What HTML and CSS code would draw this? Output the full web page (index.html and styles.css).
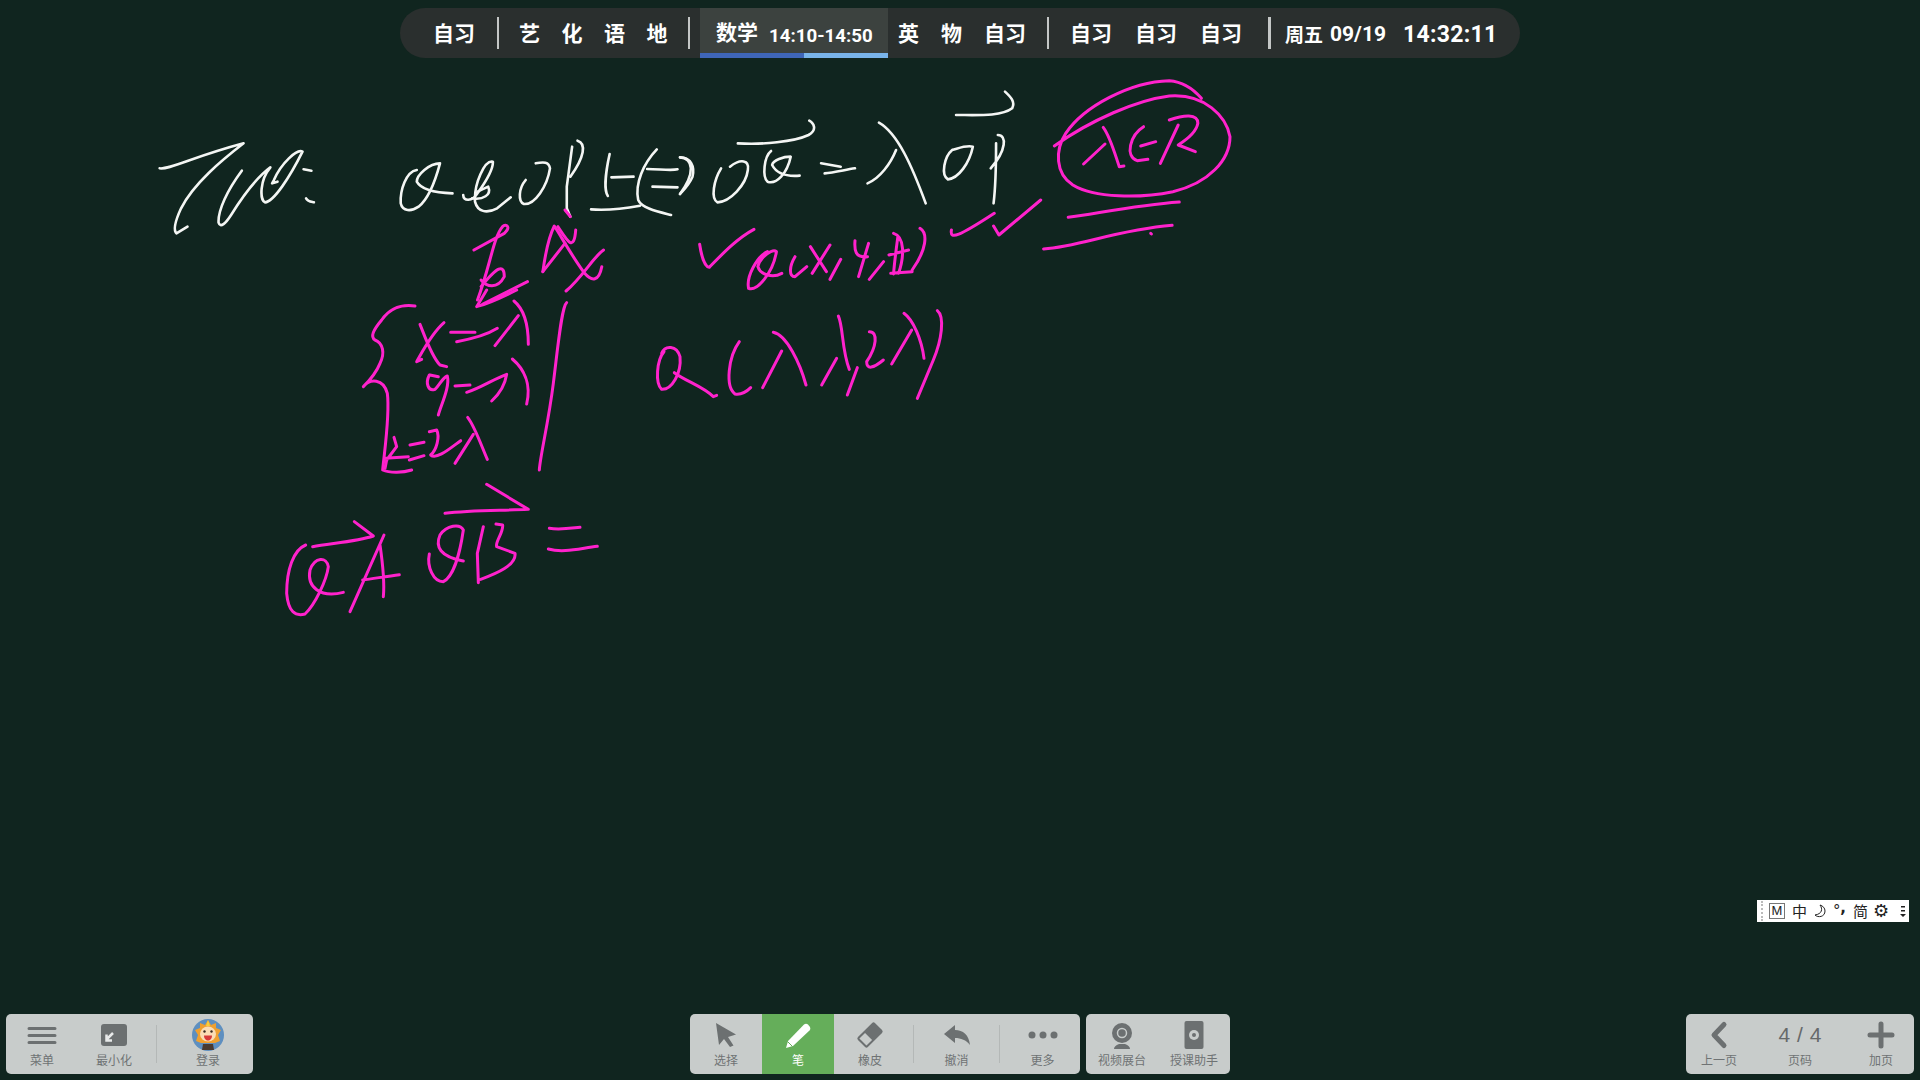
FILE: index.html
```html
<!DOCTYPE html>
<html lang="zh-CN">
<head>
  <meta charset="UTF-8" />
  <title>白板</title>
  <link rel="stylesheet" href="styles.css">
</head>
<body>

  <!-- handwriting on the board -->
  <svg class="ink" viewBox="0 0 1920 1080">
    <g class="white" transform="translate(140 80) scale(.35714 .33333)">
      <path d="M55 265C80 270 150 230 290 190C230 240 150 310 115 385C100 420 92 450 102 460L133 440"/>
      <path d="M285 272C245 330 218 390 220 428C225 445 240 430 255 405C290 345 330 290 365 262C335 300 335 360 350 367C375 365 420 290 455 215C440 205 395 250 375 300L370 310L385 305"/>
      <path d="M458 268L480 272M465 355C470 365 478 365 487 367"/>
      <path d="M775 270C745 275 728 330 730 370C735 395 760 395 780 380C810 355 830 290 840 250C810 250 775 285 775 305C785 325 820 338 875 340"/>
      <path d="M905 345C905 365 930 365 945 340C965 310 990 270 988 245C965 240 935 310 938 365C945 395 970 402 1000 385L1038 352"/>
      <path d="M945 335L975 320C985 345 960 360 930 355"/>
      <path d="M1080 300C1060 325 1058 365 1075 372C1105 375 1140 320 1148 265C1145 245 1130 245 1108 250"/>
      <path d="M1210 200L1195 320L1195 385L1205 410M1225 182C1250 190 1245 230 1205 290"/>
      <path d="M1315 222C1305 270 1298 330 1310 348M1320 292L1382 290M1263 388C1310 392 1360 385 1400 377"/>
      <path d="M1447 208C1410 250 1385 310 1395 360C1405 385 1450 395 1487 405M1420 267C1460 268 1490 272 1505 268M1435 320L1505 322M1512 232C1550 235 1555 280 1512 342"/>
    </g>
    <g class="white" transform="translate(680 70) scale(.35714 .33333)">
      <path d="M0 262C30 262 42 290 35 320C25 345 10 360 0 372"/>
      <path d="M115 295C95 330 85 385 105 397C140 395 185 345 190 300C195 270 170 265 140 290"/>
      <path d="M162 220C230 225 320 215 360 195C385 180 375 160 362 152"/>
      <path d="M255 243C235 260 230 320 245 335C270 345 300 310 310 260C290 260 260 270 258 285C270 310 300 320 335 317"/>
      <path d="M395 280L450 290M405 310C430 308 460 300 490 295"/>
      <path d="M557 158C610 190 650 290 688 400M605 240C590 280 560 325 525 340"/>
      <path d="M762 240C740 260 730 315 750 328C780 325 810 280 820 230C800 225 780 235 762 240"/>
      <path d="M890 195C915 195 915 240 870 295M885 220C885 280 885 340 878 400"/>
      <path d="M773 135C830 135 900 140 930 115C940 95 925 80 910 65"/>
    </g>
    <g class="pink" transform="translate(140 80) scale(.35714 .33333)">
      <path d="M935 510L1020 460C1040 440 1025 430 1015 440C990 470 980 560 945 660"/>
      <path d="M955 620C1000 560 1020 550 1020 590C1000 630 970 620 955 600"/>
      <path d="M960 672L1085 605"/>
      <path d="M1128 575C1135 520 1145 470 1160 438C1180 470 1210 530 1245 580C1265 605 1285 605 1293 560"/>
      <path d="M1128 575L1190 490M1170 440C1195 480 1215 520 1220 450M1298 510C1270 530 1240 590 1193 633"/>
      <path d="M1190 390L1205 410"/>
    </g>
    <g class="pink" transform="translate(680 70) scale(.35714 .33333)">
      <path d="M1048 228C1150 150 1280 90 1370 78C1470 70 1530 140 1540 200C1540 270 1480 340 1380 365C1290 385 1160 385 1100 345C1050 310 1050 240 1080 190C1130 110 1260 35 1370 32C1410 35 1440 60 1460 85"/>
      <path d="M1185 172C1205 200 1220 260 1230 290L1243 288M1190 222L1130 282"/>
      <path d="M1298 170C1260 195 1245 260 1280 272L1310 268M1290 228L1332 215"/>
      <path d="M1395 165L1345 280M1370 150C1410 135 1450 130 1450 160C1445 190 1410 215 1395 225L1443 245"/>
      <path d="M1087 442C1170 430 1280 405 1398 396M1018 537C1120 530 1220 480 1378 466M1318 490L1320 492"/>
      <path d="M760 480C755 510 780 500 880 430M878 468L893 495L1010 390"/>
      <path d="M55 523C60 560 70 590 82 592C120 550 160 505 207 478"/>
      <path d="M245 545C215 560 185 620 192 655C215 665 260 610 270 545C260 535 225 560 218 590C225 615 260 625 285 610"/>
      <path d="M322 560C305 590 305 620 322 620L355 590M365 530L410 605M420 525L370 610M450 568L420 628"/>
      <path d="M490 512C488 540 490 565 525 560M528 520L500 620M570 575L530 628"/>
      <path d="M598 490C630 500 628 560 612 610M590 610L650 605M610 500C605 540 600 580 598 612M585 555L640 540"/>
      <path d="M672 475C695 490 690 540 650 600"/>
    </g>
    <g class="pink" transform="translate(340 290) scale(.33333)">
      <path d="M225 48C180 42 150 55 125 90C100 120 90 140 105 150C130 160 135 190 120 220C110 245 95 265 70 290C90 265 130 265 142 310C150 370 135 470 128 540C150 550 190 548 215 540"/>
      <path d="M240 103C255 140 275 200 300 225L320 230M312 98C275 130 250 180 230 215L245 208"/>
      <path d="M332 127L405 127M350 155C390 148 440 135 472 115"/>
      <path d="M522 33C555 60 565 110 565 163M535 77L465 167"/>
      <path d="M268 255C255 280 265 305 285 298C300 285 305 265 322 258C330 290 305 340 295 375M270 255L295 260"/>
      <path d="M345 288L390 285M380 307C420 295 465 265 500 253C495 285 475 315 455 333"/>
      <path d="M517 207C550 235 575 280 560 342"/>
      <path d="M162 442L170 470L140 510L135 535M135 505L205 500M210 465L252 457M208 510L252 497"/>
      <path d="M268 425L290 420C300 440 290 480 272 495C290 510 330 475 362 452"/>
      <path d="M383 382C405 410 425 470 442 508M400 433L345 520"/>
      <path d="M680 38C665 50 655 160 640 280C625 400 600 500 598 540"/>
      <path d="M530 0C490 20 450 40 410 50L440 0"/>
    </g>
    <g class="pink" transform="translate(640 290) scale(.33333)">
      <path d="M72 185C50 210 45 280 65 298C95 300 125 250 120 200C110 165 75 165 65 190M103 248C140 275 190 290 220 320L230 316"/>
      <path d="M298 155C265 200 255 290 285 312C305 315 320 305 332 293"/>
      <path d="M400 127C440 135 480 220 498 285M425 183L368 293"/>
      <path d="M595 78C610 110 605 180 628 238M590 205L545 285M652 233L622 315"/>
      <path d="M688 125C715 125 710 170 680 215C680 240 700 235 730 210"/>
      <path d="M792 70C820 90 845 150 852 205M815 120L755 222"/>
      <path d="M892 62C915 80 905 150 880 210L832 325"/>
    </g>
    <g class="pink" transform="translate(270 470) scale(.33333)">
      <path d="M107 225C70 240 50 300 50 370C55 425 75 440 105 432C135 405 170 330 175 290C170 260 135 260 120 300C110 350 150 385 220 367"/>
      <path d="M128 230C180 220 260 215 310 198L253 155"/>
      <path d="M342 195L240 425M330 225C338 280 345 330 340 380M278 330C310 325 350 320 388 314"/>
      <path d="M478 252C470 290 490 335 520 335C550 320 570 250 580 180C570 160 530 165 510 195C495 230 510 260 580 273"/>
      <path d="M525 130C600 120 690 122 775 118L650 43"/>
      <path d="M640 170L622 250L625 338M678 162L698 165C700 190 675 215 680 230L735 250C740 285 680 310 632 328"/>
      <path d="M838 175C870 180 900 175 930 172M835 237C880 250 930 235 982 229"/>
    </g>
  </svg>

  <div class="page">
    <!-- Timetable bar -->
    <div class="schedule">
      <div class="slot slot-first"><span>自习</span></div>
      <i class="sep"></i>
      <div class="slot slot-art"><span>艺</span><span>化</span><span>语</span><span>地</span></div>
      <i class="sep"></i>
      <div class="slot-now">
        <span class="now-name">数学</span><span class="now-time">14:10-14:50</span>
        <div class="progress"><b></b><u></u></div>
      </div>
      <div class="slot slot-after"><span>英</span><span>物</span><span>自习</span></div>
      <i class="sep"></i>
      <div class="slot slot-self"><span>自习</span><span>自习</span><span>自习</span></div>
      <i class="sep sep-wide"></i>
      <div class="clock"><span class="week">周五</span><span class="date">09/19</span><span class="time">14:32:11</span></div>
    </div>

    <!-- Bottom toolbars -->
    <div class="toolbars">
      <div class="group group-left">
        <div class="tool">
          <svg viewBox="0 0 32 28"><path class="line" d="M3 7.500H29M3 14.500H29M3 21.500H29"/></svg>
          <span>菜单</span>
        </div>
        <div class="tool">
          <svg viewBox="0 0 32 28"><rect class="fill" x="3" y="3" width="26" height="22" rx="3"/><path class="arrow" d="M15 12L8.500 18.500M8.500 13.500V19.500H14"/></svg>
          <span>最小化</span>
        </div>
        <i class="divider divider-login"></i>
        <div class="tool tool-login">
          <svg viewBox="0 0 32 28" class="avatar">
            <circle cx="16" cy="14" r="16" fill="#5e8fc0"/>
            <path d="M16 -1L19 4L24 2L24 7L29 9L26 14L28 20L23 22H9L4 20L6 14L3 9L8 7L8 2L13 4Z" fill="#f0a030"/>
            <path d="M16 -1L18 5H14Z" fill="#f7cf3c"/>
            <ellipse cx="16" cy="13" rx="8" ry="7.500" fill="#fbdcb4"/>
            <circle cx="12.500" cy="10.500" r="1.200" fill="#3a2a20"/>
            <circle cx="19.500" cy="10.500" r="1.200" fill="#3a2a20"/>
            <path d="M12 14.500H20C20 18 18 19.500 16 19.500C14 19.500 12 18 12 14.500Z" fill="#d83a3a"/>
            <path d="M11 23H21L22 29H10Z" fill="#4a3a30"/>
          </svg>
          <span>登录</span>
        </div>
      </div>

      <div class="group group-draw">
        <div class="tool">
          <svg viewBox="0 0 32 28"><path class="fill" d="M6 2L26 13.500L18 16L23.500 24.500L20 26L14 18L9 24Z"/></svg>
          <span>选择</span>
        </div>
        <div class="tool active">
          <svg viewBox="0 0 32 28"><path fill="#fff" d="M4 27L6 20L22 3.500Q24 2 26 3.500L28 6Q29 8 27.500 9.500L11 25Z"/><path stroke="#65ae5a" stroke-width="1" d="M5.500 20.500L10.500 25.500"/></svg>
          <span>笔</span>
        </div>
        <div class="tool tool-eraser">
          <svg viewBox="0 0 32 28"><g transform="rotate(-45 16 14)"><rect class="fill" x="4" y="7" width="24" height="14" rx="2"/><rect class="hole" x="6" y="9" width="8" height="10"/></g></svg>
          <span>橡皮</span>
        </div>
        <i class="divider"></i>
        <div class="tool tool-undo">
          <svg viewBox="0 0 32 28"><path class="fill" d="M3 13L14 4V9C22 9 28 14 29 24C25 19 20 17 14 17V22Z"/></svg>
          <span>撤消</span>
        </div>
        <i class="divider"></i>
        <div class="tool tool-more">
          <svg viewBox="0 0 32 28"><circle class="fill" cx="5" cy="14" r="3.500"/><circle class="fill" cx="16" cy="14" r="3.500"/><circle class="fill" cx="27" cy="14" r="3.500"/></svg>
          <span>更多</span>
        </div>
      </div>

      <div class="group group-class">
        <div class="tool">
          <svg viewBox="0 0 32 28"><path class="fill" d="M8 28Q8 25 13 23H19Q24 25 24 28Z"/><circle class="fill" cx="16" cy="12" r="10"/><circle class="ring" cx="16" cy="12" r="4.500"/></svg>
          <span>视频展台</span>
        </div>
        <div class="tool">
          <svg viewBox="0 0 32 28"><rect class="fill" x="6.500" y="0" width="19" height="28" rx="2"/><circle class="hole" cx="16" cy="14" r="5"/><circle class="fill" cx="16" cy="14" r="2"/></svg>
          <span>授课助手</span>
        </div>
      </div>

      <div class="group group-page">
        <div class="tool tool-side">
          <svg viewBox="0 0 32 28"><path class="line line-thick" d="M21 3.500L11 14L21 24.500"/></svg>
          <span>上一页</span>
        </div>
        <div class="tool tool-count">
          <div class="count">4 / 4</div>
          <span>页码</span>
        </div>
        <div class="tool tool-side">
          <svg viewBox="0 0 32 28"><path class="line line-thick" d="M16 3V25M5 14H27"/></svg>
          <span>加页</span>
        </div>
      </div>
    </div>
  </div>

  <!-- Input method bar floats over the board -->
  <div class="ime">
    <i class="grip"></i>
    <span class="ime-m">M</span>
    <span class="ime-zh">中</span>
    <svg class="ime-moon" viewBox="0 0 12 14"><path d="M6 1C9 5 8 10 1 11C4 14 11 13 11 7C11 4 9 2 6 1Z"/></svg>
    <span class="ime-dot">°</span>
    <span class="ime-comma">,</span>
    <span class="ime-zh ime-jian">简</span>
    <span class="ime-gear">⚙</span>
    <svg class="ime-menu" viewBox="0 0 6 12"><path d="M1 1H5V2.500H1ZM1 5H5V6.500H1ZM0 9H6L3 12Z"/></svg>
  </div>

</body>
</html>
```
FILE: styles.css
```css
* {
  box-sizing: border-box;
}

body {
  margin: 0;
  width: 1920px;
  height: 1080px;
  overflow: hidden;
  position: relative;
  background-color: #10251f;
  font-family: "Noto Sans CJK SC", "Noto Sans", sans-serif;
}

.ink {
  position: absolute;
  left: 0;
  top: 0;
  width: 1920px;
  height: 1080px;
}

.ink path {
  fill: none;
  stroke-linecap: round;
  stroke-linejoin: round;
  vector-effect: non-scaling-stroke;
}

.ink .white path {
  stroke: #f4f6f4;
  stroke-width: 2.600;
}

.ink .pink path {
  stroke: #ff22cc;
  stroke-width: 3;
}

.page {
  position: relative;
  height: 1080px;
  padding: 8px 6px 6px;
  display: flex;
  flex-direction: column;
  justify-content: space-between;
}

/* Timetable bar */
.schedule {
  align-self: center;
  width: 1120px;
  height: 50px;
  display: flex;
  align-items: center;
  background-color: #2a2f2e;
  border-radius: 25px;
  color: #fff;
  font-size: 21px;
  font-weight: 700;
  overflow: hidden;
}

.slot {
  display: flex;
  align-items: center;
  padding-bottom: 2px;
}

.slot-first {
  width: 97px;
  padding-left: 33px;
}

.slot-art {
  width: 189px;
  padding-left: 20px;
  gap: 21.500px;
}

.sep {
  width: 2px;
  height: 32px;
  background-color: #c4c7c6;
}

.sep-wide {
  width: 3px;
}

.slot-now {
  position: relative;
  width: 188px;
  height: 50px;
  margin-left: 10px;
  padding: 0 0 4px 16px;
  display: flex;
  align-items: center;
  background-color: #3c423f;
}

.now-name {
  width: 53px;
}

.now-time {
  margin-top: 10px;
  font-family: "Roboto", sans-serif;
  font-size: 18.700px;
  font-weight: 700;
}

.progress {
  position: absolute;
  left: 0;
  bottom: 0;
  width: 100%;
  height: 5px;
  display: flex;
}

.progress b {
  width: 104px;
  background-color: #3f66b8;
}

.progress u {
  flex: 1;
  background-color: #79b4ea;
}

.slot-after {
  width: 159px;
  padding-left: 10px;
  gap: 22px;
}

.slot-self {
  width: 219px;
  padding-left: 21px;
  gap: 23px;
}

.clock {
  padding-left: 14px;
  display: flex;
  align-items: center;
}

.week {
  font-size: 19px;
  width: 45px;
}

.date {
  width: 73px;
  margin-top: 2px;
  font-family: "Roboto", sans-serif;
  font-size: 21px;
  font-weight: 700;
}

.time {
  margin-top: 2px;
  font-family: "Roboto", sans-serif;
  font-size: 23px;
  font-weight: 700;
  letter-spacing: 0.300px;
}

/* Bottom toolbars */
.toolbars {
  display: flex;
  height: 60px;
}

.group {
  display: flex;
  align-items: center;
  background-color: #c8cccb;
  border-radius: 5px;
  overflow: hidden;
}

.group-left {
  width: 247px;
}

.group-draw {
  width: 390px;
  margin-left: 437px;
}

.group-class {
  width: 144px;
  margin-left: 6px;
}

.group-page {
  width: 228px;
  margin-left: auto;
}

.tool {
  width: 72px;
  height: 60px;
  padding-top: 7px;
  display: flex;
  flex-direction: column;
  align-items: center;
  color: #6f7374;
  font-size: 12px;
  line-height: 14px;
}

.tool svg {
  width: 32px;
  height: 28px;
  margin-bottom: 4px;
  overflow: visible;
}

.tool.active {
  background-color: #65ae5a;
  color: #fff;
}

.divider-login {
  margin-left: 6px;
}

.tool-login {
  margin-left: 15px;
}

.tool-eraser {
  width: 79px;
  padding-right: 7px;
}

.tool-undo {
  width: 85px;
}

.tool-more {
  width: 78px;
  padding-left: 7px;
}

.tool-side {
  width: 66px;
}

.tool-count {
  width: 96px;
}

.count {
  height: 28px;
  margin-bottom: 4px;
  font-family: "Liberation Sans", sans-serif;
  font-size: 21px;
  line-height: 28px;
  word-spacing: 1px;
  color: #66696a;
}

.divider {
  width: 1px;
  height: 38px;
  background-color: #b4b8b7;
}

.fill {
  fill: #6c7071;
}

.hole {
  fill: #c8cccb;
}

.ring {
  fill: none;
  stroke: #c8cccb;
  stroke-width: 1.500;
}

.line {
  fill: none;
  stroke: #6c7071;
  stroke-width: 3;
  stroke-linecap: round;
  stroke-linejoin: round;
}

.line-thick {
  stroke-width: 5;
}

.arrow {
  fill: none;
  stroke: #e8eaea;
  stroke-width: 2.500;
}

/* Input method bar */
.ime {
  position: absolute;
  left: 1757px;
  top: 900px;
  width: 152px;
  height: 22px;
  display: flex;
  align-items: center;
  background-color: #fff;
  color: #222;
  font-size: 15px;
  line-height: 22px;
}

.ime span {
  display: block;
  text-align: center;
}

.grip {
  width: 2px;
  height: 20px;
  margin-left: 4px;
  border-left: 2px dotted #bbb;
}

.ime-m {
  width: 16px;
  height: 16px;
  margin-left: 6px;
  border: 1px solid #777;
  font-family: "Liberation Sans", sans-serif;
  font-size: 13px;
  line-height: 14px;
}

.ime-zh {
  width: 15px;
  margin-left: 7px;
}

.ime-moon {
  width: 12px;
  height: 14px;
  margin-left: 7px;
  fill: none;
  stroke: #222;
  stroke-width: 1;
}

.ime-dot {
  width: 5px;
  margin-left: 7px;
  font-family: "DejaVu Sans", sans-serif;
}

.ime-comma {
  width: 6px;
  margin-left: 2px;
  margin-top: -6px;
  font-family: "DejaVu Sans", sans-serif;
  font-weight: 700;
}

.ime-jian {
  margin-left: 7px;
}

.ime-gear {
  width: 16px;
  margin-left: 5px;
  font-family: "DejaVu Sans", sans-serif;
  font-size: 18px;
}

.ime-menu {
  width: 6px;
  height: 12px;
  margin-left: 11px;
  fill: #222;
}
```
